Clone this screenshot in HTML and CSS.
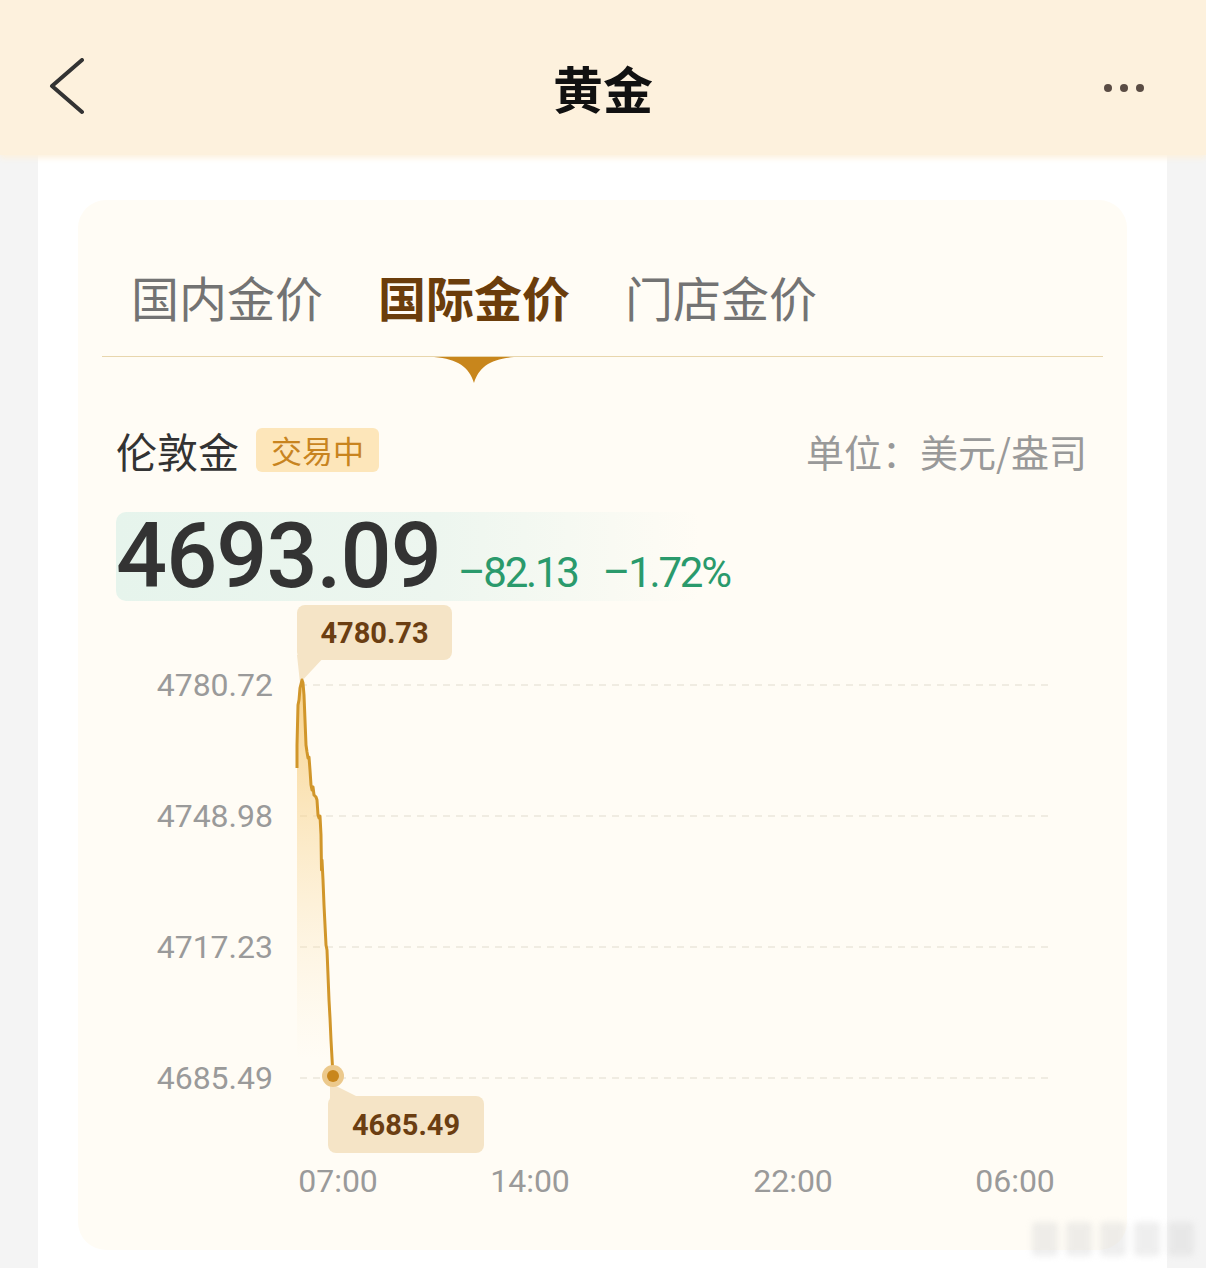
FILE: index.html
```html
<!DOCTYPE html>
<html lang="zh-CN">
<head>
    <meta charset="UTF-8">
    <meta name="viewport" content="width=device-width, initial-scale=1.0">
    <title>黄金</title>
    <link rel="stylesheet" href="styles.css">
</head>
<body>
    <header class="top-bar">
        <svg class="back-icon" width="40" height="60" viewBox="0 0 40 60">
            <path d="M34 2 L4 28 L34 54" fill="none" stroke="#333" stroke-width="4" stroke-linecap="round" stroke-linejoin="round"/>
        </svg>
        <h1 class="page-title">黄金</h1>
        <div class="more-icon"><span></span><span></span><span></span></div>
    </header>

    <div class="panel">
        <section class="price-card">
            <nav class="tabs">
                <span class="tab">国内金价</span>
                <span class="tab active">国际金价
                    <svg class="tab-arrow" width="80" height="26" viewBox="0 0 80 26">
                        <path d="M0 0 H80 C56 2 45 10 40 26 C35 10 24 2 0 0 Z" fill="#c8861c"/>
                    </svg>
                </span>
                <span class="tab">门店金价</span>
            </nav>

            <div class="info-row">
                <div class="market">
                    <span class="market-name">伦敦金</span>
                    <span class="badge">交易中</span>
                </div>
                <span class="unit">单位：美元/盎司</span>
            </div>

            <div class="price-row">
                <span class="price">4693.09</span>
                <span class="change">–82.13</span>
                <span class="change">–1.72%</span>
            </div>

            <div class="chart">
                <svg class="chart-svg" width="1002" height="649" viewBox="102 601 1002 649">
                    <defs>
                        <linearGradient id="areaFill" x1="0" y1="680" x2="0" y2="1060" gradientUnits="userSpaceOnUse">
                            <stop offset="0" stop-color="#f6c872" stop-opacity="0.8"/>
                            <stop offset="1" stop-color="#fbe7bf" stop-opacity="0"/>
                        </linearGradient>
                    </defs>
                    <g class="grid">
                        <line x1="300" y1="685" x2="1050" y2="685"/>
                        <line x1="300" y1="816" x2="1050" y2="816"/>
                        <line x1="300" y1="947" x2="1050" y2="947"/>
                        <line x1="300" y1="1078" x2="1050" y2="1078"/>
                    </g>
                    <g class="y-labels">
                        <text x="273" y="696">4780.72</text>
                        <text x="273" y="827">4748.98</text>
                        <text x="273" y="958">4717.23</text>
                        <text x="273" y="1089">4685.49</text>
                    </g>
                    <g class="x-labels">
                        <text x="338" y="1192">07:00</text>
                        <text x="530" y="1192">14:00</text>
                        <text x="793" y="1192">22:00</text>
                        <text x="1015" y="1192">06:00</text>
                    </g>
                    <polygon points="297,655 326,655 300,683" fill="#f5e4c6"/>
                    <polygon points="330,1083 330,1100 364,1100" fill="#f5e4c6"/>
                    <path d="M297,768 L297,745 L298,705 L299,700 L300,688 L301,684 L302,680 L303,683 L304,695 L305,720 L306,745 L307,752 L308,758 L309,757 L310,770 L311,785 L312,790 L313,787 L314,795 L316,797 L317,800 L318,815 L319,818 L320,816 L321,835 L321.5,870 L322,860 L323,880 L324,905 L325,925 L326,945 L327,950 L328,975 L329,1000 L330,1018 L331,1040 L332,1058 L333,1076 L333,1090 L297,1090 Z" fill="url(#areaFill)"/>
                    <path d="M297,768 L297,745 L298,705 L299,700 L300,688 L301,684 L302,680 L303,683 L304,695 L305,720 L306,745 L307,752 L308,758 L309,757 L310,770 L311,785 L312,790 L313,787 L314,795 L316,797 L317,800 L318,815 L319,818 L320,816 L321,835 L321.5,870 L322,860 L323,880 L324,905 L325,925 L326,945 L327,950 L328,975 L329,1000 L330,1018 L331,1040 L332,1058 L333,1076" fill="none" stroke="#d1962a" stroke-width="3" stroke-linejoin="round"/>
                    <circle cx="333" cy="1076" r="11" fill="#ecc98c"/>
                    <circle cx="333" cy="1076" r="6" fill="#c8861c"/>
                </svg>
                <div class="tip tip-high">4780.73</div>
                <div class="tip tip-low">4685.49</div>
            </div>
        </section>
    </div>

    <div class="watermark"><span></span><span></span><span></span><span></span><span></span></div>
</body>
</html>
```

FILE: styles.css
```css
body {
    margin: 0;
    background: #f4f4f4;
    font-family: "Noto Sans CJK SC", "Noto Sans", sans-serif;
    position: relative;
    height: 1268px;
    overflow: hidden;
}

/* Top navigation bar */
.top-bar {
    height: 155px;
    box-sizing: border-box;
    background: #fdf1dd;
    display: flex;
    align-items: center;
    justify-content: space-between;
    padding: 20px 62px 0 48px;
    box-shadow: 0 3px 6px #fdf1dd;
    position: relative;
    z-index: 1;
}

.back-icon {
    display: block;
}

.page-title {
    margin: 0;
    font-size: 50px;
    font-weight: 700;
    color: #111;
    line-height: 1;
    position: absolute;
    left: 50%;
    top: 62px;
    transform: translateX(-50%);
}

.more-icon {
    display: flex;
    gap: 8px;
}

.more-icon span {
    width: 8px;
    height: 8px;
    border-radius: 50%;
    background: #5a4c44;
}

/* White panel */
.panel {
    margin: 0 39px 0 38px;
    background: #fff;
    padding: 45px 40px 18px 40px;
}

.price-card {
    background: #fffcf5;
    border-radius: 28px;
    padding: 0 24px;
    height: 1050px;
    box-sizing: border-box;
}

/* Tabs */
.tabs {
    display: flex;
    padding: 67px 0 31px 29px;
    border-bottom: 1px solid #e8d6ad;
}

.tab {
    font-size: 48px;
    line-height: 58px;
    color: #737373;
    margin-right: 55px;
    position: relative;
    white-space: nowrap;
}

.tab.active {
    color: #6b3d0b;
    font-weight: 700;
}

.tab-arrow {
    position: absolute;
    left: 50%;
    top: calc(100% + 32px);
    transform: translateX(-50%);
}

/* Market info */
.info-row {
    display: flex;
    justify-content: space-between;
    align-items: center;
    margin-top: 71px;
    padding: 0 16px 0 14px;
    height: 44px;
}

.market {
    display: flex;
    align-items: center;
    gap: 17px;
}

.market-name {
    font-size: 41px;
    color: #333;
}

.badge {
    background: #fde6ba;
    color: #c8841f;
    font-size: 31px;
    line-height: 44px;
    padding: 0 15px;
    border-radius: 6px;
}

.unit {
    font-size: 38px;
    color: #999;
}

/* Price */
.price-row {
    display: flex;
    align-items: baseline;
    margin: 40px 0 0 14px;
    width: 584px;
    height: 89px;
    border-radius: 10px;
    background: linear-gradient(90deg, #e6f4ec 0%, #edf6ef 55%, rgba(255, 252, 245, 0) 100%);
    font-family: Roboto, "Liberation Sans", sans-serif;
    white-space: nowrap;
}

.price {
    font-size: 90px;
    line-height: 89px;
    font-weight: 500;
    color: #333;
    letter-spacing: -1px;
    flex-shrink: 0;
}

.change {
    font-size: 42px;
    color: #2a9a6c;
    margin-left: 17px;
    letter-spacing: -2.2px;
    flex-shrink: 0;
}

.change + .change {
    margin-left: 25px;
}

/* Chart */
.chart {
    position: relative;
    height: 649px;
}

.chart-svg {
    display: block;
    font-family: Roboto, "Liberation Sans", sans-serif;
}

.grid line {
    stroke: #ebe6dc;
    stroke-width: 1.5;
    stroke-dasharray: 7 6;
}

.y-labels text {
    font-size: 32px;
    fill: #9a9a9a;
    text-anchor: end;
}

.x-labels text {
    font-size: 32px;
    fill: #9a9a9a;
    text-anchor: middle;
}

.tip {
    position: absolute;
    background: #f5e4c6;
    color: #6b3e12;
    font-family: Roboto, "Liberation Sans", sans-serif;
    font-weight: 700;
    font-size: 29px;
    border-radius: 8px;
    display: flex;
    align-items: center;
    justify-content: center;
}

.tip-high {
    left: 195px;
    top: 4px;
    width: 155px;
    height: 55px;
}

.tip-low {
    left: 226px;
    top: 495px;
    width: 156px;
    height: 57px;
}

/* Blurred corner watermark */
.watermark {
    position: absolute;
    right: 12px;
    bottom: 12px;
    display: flex;
    gap: 8px;
    filter: blur(3px);
    opacity: 0.4;
}

.watermark span {
    width: 26px;
    height: 34px;
    background: #d6d6d6;
    border-radius: 4px;
}
```
